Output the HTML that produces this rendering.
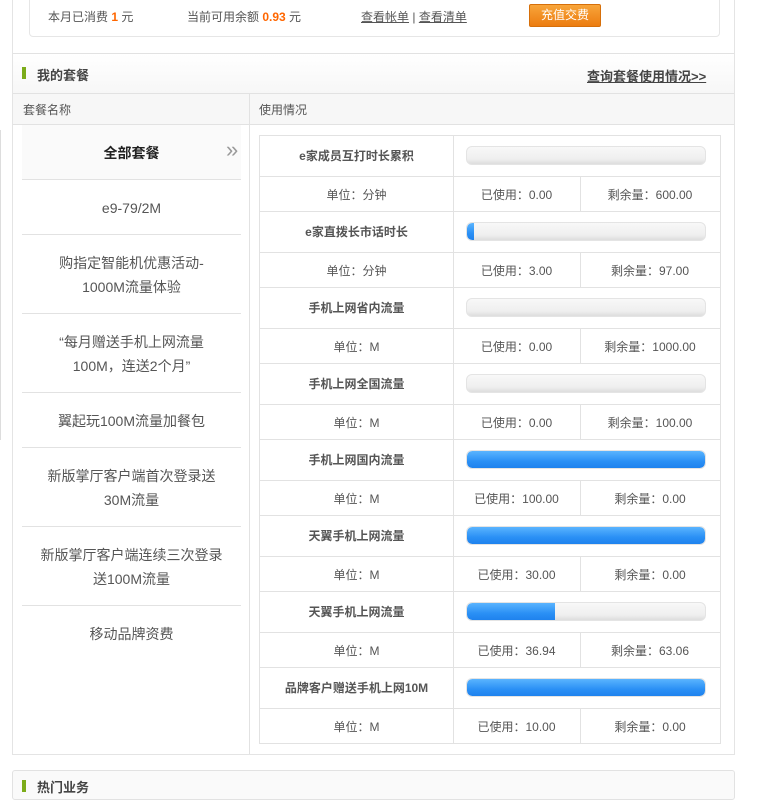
<!DOCTYPE html>
<html><head><meta charset="utf-8"><style>
*{margin:0;padding:0;box-sizing:border-box}
body{width:780px;height:783px;background:#fff;font-family:"Liberation Sans","Noto Sans CJK SC",sans-serif;color:#555;font-size:13px;position:relative;overflow:hidden}
.a{position:absolute}
.c{text-align:center}
.bar{position:absolute;left:466px;width:240px;height:19px;border-radius:6px;background:linear-gradient(#f8f8f8,#efefef 70%,#ddd);border:1px solid #e4e4e4;overflow:hidden}
.fill{height:100%;background:linear-gradient(#5ab4ff,#2b90f5 60%,#1e82ee);border-radius:5px 0 0 5px}
.fill.full{border-radius:5px}
.hl{position:absolute;height:1px;background:#e2e2e2}
.vl{position:absolute;width:1px;background:#e2e2e2}
.li{position:absolute;left:22px;width:219px;text-align:center;color:#555;font-size:14px;line-height:24px}
</style></head><body>
<!-- outer panel -->
<div class="a" style="left:12px;top:-2px;width:723px;height:757px;border:1px solid #e4e4e4;border-top:none"></div>
<div class="a" style="left:0;top:130px;width:2px;height:310px;border-left:1px solid #ddd"></div>
<div class="a" style="left:29px;top:-5px;width:691px;height:42px;border:1px solid #e6e6e6;border-radius:4px"></div>
<div class="a" style="left:48px;top:8px;font-size:12px">本月已消费 <b style="color:#f60">1</b> 元</div>
<div class="a" style="left:187px;top:8px;font-size:12px">当前可用余额 <b style="color:#f60">0.93</b> 元</div>
<div class="a" style="left:361px;top:8px;font-size:12px"><u>查看帐单</u> | <u>查看清单</u></div>
<div class="a c" style="left:529px;top:4px;width:72px;height:23px;line-height:21px;background:linear-gradient(#f8a53a,#ec7c10);border:1px solid #d66f0a;border-radius:2px;color:#fff;font-size:12px">充值交费</div>
<!-- section header -->
<div class="a" style="left:13px;top:53px;width:721px;height:41px;border-top:1px solid #e2e2e2;border-bottom:1px solid #e2e2e2;background:linear-gradient(#fff,#f7f7f7)"></div>
<div class="a" style="left:22px;top:67px;width:4px;height:12px;background:#7cac1a"></div>
<div class="a" style="left:37px;top:65px;font-weight:bold;font-size:13px;color:#444">我的套餐</div>
<div class="a" style="left:587px;top:66px;font-weight:bold;font-size:13px;color:#444;text-decoration:underline">查询套餐使用情况&gt;&gt;</div>
<div class="a" style="left:13px;top:94px;width:721px;height:31px;background:#f7f7f7;border-bottom:1px solid #e2e2e2"></div>
<div class="a" style="left:23px;top:101px;font-size:12px">套餐名称</div>
<div class="a" style="left:259px;top:101px;font-size:12px">使用情况</div>
<div class="vl" style="left:249px;top:94px;height:660px"></div>
<!-- left list -->
<div class="a" style="left:22px;top:125px;width:219px;height:54px;background:#fafafa"></div>
<div class="li" style="top:141px;font-weight:bold;color:#222">全部套餐</div>
<div class="a" style="left:226px;top:137px;font-size:22px;color:#999;line-height:26px">»</div>
<div class="hl" style="left:22px;width:219px;top:179px"></div>
<div class="li" style="top:196px">e9-79/2M</div>
<div class="hl" style="left:22px;width:219px;top:234px"></div>
<div class="li" style="top:251px">购指定智能机优惠活动-<br>1000M流量体验</div>
<div class="hl" style="left:22px;width:219px;top:313px"></div>
<div class="li" style="top:330px">“每月赠送手机上网流量<br>100M，连送2个月”</div>
<div class="hl" style="left:22px;width:219px;top:392px"></div>
<div class="li" style="top:409px">翼起玩100M流量加餐包</div>
<div class="hl" style="left:22px;width:219px;top:447px"></div>
<div class="li" style="top:464px">新版掌厅客户端首次登录送<br>30M流量</div>
<div class="hl" style="left:22px;width:219px;top:526px"></div>
<div class="li" style="top:543px">新版掌厅客户端连续三次登录<br>送100M流量</div>
<div class="hl" style="left:22px;width:219px;top:605px"></div>
<div class="li" style="top:622px">移动品牌资费</div>
<!-- right table -->
<div class="a" style="left:259px;top:135px;width:462px;height:609px;border:1px solid #e2e2e2"></div>
<div class="vl" style="left:453px;top:135px;height:609px"></div>
<div id="rows"></div>
<script>
var d=[["e家成员互打时长累积","分钟","0.00","600.00",0],["e家直拨长市话时长","分钟","3.00","97.00",3],["手机上网省内流量","M","0.00","1000.00",0],["手机上网全国流量","M","0.00","100.00",0],["手机上网国内流量","M","100.00","0.00",100],["天翼手机上网流量","M","30.00","0.00",100],["天翼手机上网流量","M","36.94","63.06",37],["品牌客户赠送手机上网10M","M","10.00","0.00",100]];
var h="";
d.forEach(function(r,i){var t=135+76*i;
h+='<div class="a c" style="left:260px;width:193px;top:'+(t+12)+'px;font-weight:bold;font-size:12px;color:#555">'+r[0]+'</div>';
h+='<div class="bar" style="top:'+(t+11)+'px">'+(r[4]?'<div class="fill'+(r[4]==100?' full':'')+'" style="width:'+(r[4]==3?3:r[4])+'%"></div>':'')+'</div>';
h+='<div class="hl" style="left:260px;width:460px;top:'+(t+41)+'px"></div>';
if(i<7)h+='<div class="hl" style="left:260px;width:460px;top:'+(t+76)+'px"></div>';
h+='<div class="vl" style="left:580px;top:'+(t+41)+'px;height:35px"></div>';
h+='<div class="a c" style="left:260px;width:193px;top:'+(t+51)+'px;font-size:12px">单位：'+r[1]+'</div>';
h+='<div class="a c" style="left:453px;width:127px;top:'+(t+51)+'px;font-size:12px">已使用：'+r[2]+'</div>';
h+='<div class="a c" style="left:580px;width:140px;top:'+(t+51)+'px;font-size:12px">剩余量：'+r[3]+'</div>';
});
document.getElementById("rows").innerHTML=h;
</script>
<!-- bottom panel -->
<div class="a" style="left:12px;top:770px;width:723px;height:30px;border:1px solid #e2e2e2;border-radius:3px;background:#fafafa"></div>
<div class="a" style="left:22px;top:780px;width:4px;height:12px;background:#7cac1a"></div>
<div class="a" style="left:37px;top:777px;font-weight:bold;font-size:13px;color:#444">热门业务</div>
</body></html>
